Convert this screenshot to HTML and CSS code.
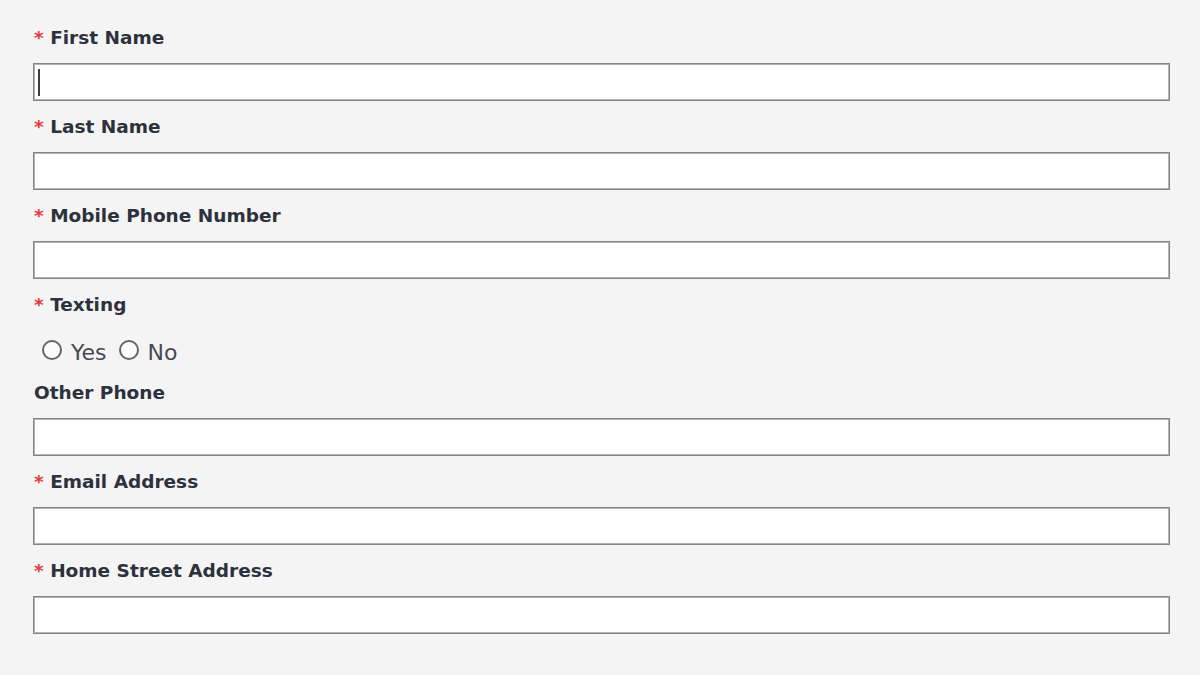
FILE: index.html
```html
<!DOCTYPE html>
<html lang="en">
<head>
<meta charset="utf-8">
<title>Contact form</title>
<link rel="stylesheet" href="styles.css">
</head>
<body>
<form class="form">
  <div class="field">
    <label class="label"><span class="req">*</span> First Name</label>
    <div class="input-wrap caret">
      <input class="input" type="text">
    </div>
  </div>
  <div class="field">
    <label class="label"><span class="req">*</span> Last Name</label>
    <input class="input" type="text">
  </div>
  <div class="field">
    <label class="label"><span class="req">*</span> Mobile Phone Number</label>
    <input class="input" type="text">
  </div>
  <div class="field field-radio">
    <label class="label"><span class="req">*</span> Texting</label>
    <div class="radios">
      <span class="radio"><span class="circle"></span><span class="radio-text">Yes</span></span>
      <span class="radio"><span class="circle"></span><span class="radio-text">No</span></span>
    </div>
  </div>
  <div class="field">
    <label class="label">Other Phone</label>
    <input class="input" type="text">
  </div>
  <div class="field">
    <label class="label"><span class="req">*</span> Email Address</label>
    <input class="input" type="text">
  </div>
  <div class="field">
    <label class="label"><span class="req">*</span> Home Street Address</label>
    <input class="input" type="text">
  </div>
</form>
</body>
</html>
```
FILE: styles.css
```css
html, body {
  margin: 0;
  padding: 0;
  background: #f4f4f4;
}

.form {
  display: flex;
  flex-direction: column;
  width: 1137px;
  margin: 0 0 0 33px;
  padding-top: 27px;
}

.field {
  display: flex;
  flex-direction: column;
  margin-bottom: 15px;
}

.field-radio {
  margin-bottom: 8px;
}

.label {
  display: block;
  font-family: "DejaVu Sans", Verdana, sans-serif;
  font-weight: bold;
  font-size: 18.5px;
  line-height: 22px;
  height: 22px;
  color: #2c313b;
  padding-left: 1px;
  margin-bottom: 14px;
  white-space: nowrap;
}

.req {
  color: #e23b3b;
}

.input-wrap {
  position: relative;
}

.caret::after {
  content: "";
  position: absolute;
  left: 5px;
  top: 6px;
  width: 2px;
  height: 27px;
  background: #3c3c3c;
}

.input {
  display: block;
  box-sizing: border-box;
  width: 100%;
  height: 38px;
  margin: 0;
  padding: 0 6px;
  background: #ffffff;
  border: 1px solid #848484;
  box-shadow: inset 0 0 0 1px #b4b4b4;
  border-radius: 0;
  outline: none;
  font-family: "Liberation Sans", Arial, sans-serif;
  font-size: 20px;
}

.radios {
  display: flex;
  align-items: flex-start;
  gap: 12px;
  margin-top: -14px;
  padding-top: 14px;
  height: 44px;
}

.radio {
  display: flex;
  align-items: flex-start;
  gap: 9px;
}

.radio:first-child {
  margin-left: 9px;
}

.circle {
  display: block;
  box-sizing: border-box;
  width: 20px;
  height: 20px;
  margin-top: 10px;
  border: 2px solid #656565;
  border-radius: 50%;
  background: #fbfbfb;
}

.radio-text {
  display: block;
  font-family: "DejaVu Sans", Verdana, sans-serif;
  font-size: 22px;
  line-height: 40px;
  padding-top: 3px;
  color: #474a53;
}
```
